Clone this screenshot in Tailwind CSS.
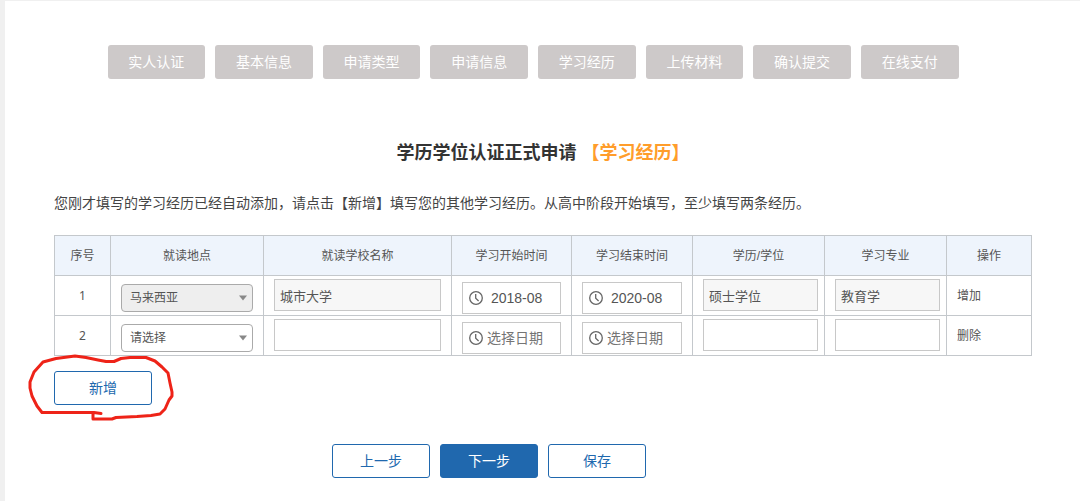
<!DOCTYPE html>
<html lang="zh-CN">
<head>
  <meta charset="UTF-8" />
  <meta name="viewport" content="width=device-width, initial-scale=1.0" />
  <title>学历学位认证正式申请</title>
  <script src="https://cdn.jsdelivr.net/npm/@tailwindcss/browser@4"></script>
</head>
<body class="min-h-screen bg-[#f0f0f0] pl-[5px] pt-px font-['Liberation_Sans','Noto_Sans_CJK_SC',sans-serif] text-sm text-[#555]">

  <svg class="hidden">
    <symbol id="clock" viewBox="0 0 14 14">
      <circle cx="7" cy="7" r="6.3" fill="none" stroke="currentColor" stroke-width="1.3" />
      <path d="M6.7 3v4.3L9.6 10" fill="none" stroke="currentColor" stroke-width="1.3" />
    </symbol>
    <symbol id="caret" viewBox="0 0 8 6">
      <path d="M0 .5h8L4 5.5z" fill="currentColor" />
    </symbol>
  </svg>

  <main class="min-h-[calc(100vh-1px)] bg-white pl-[49px] pr-12 pt-11 pb-5">

    <!-- Steps -->
    <nav class="flex justify-center pr-5">
      <div class="grid w-full max-w-[851px] grid-cols-8 gap-2.5 text-white">
        <button class="h-[34px] rounded-[3px] bg-[#cdc9c9]">实人认证</button>
        <button class="h-[34px] rounded-[3px] bg-[#cdc9c9]">基本信息</button>
        <button class="h-[34px] rounded-[3px] bg-[#cdc9c9]">申请类型</button>
        <button class="h-[34px] rounded-[3px] bg-[#cdc9c9]">申请信息</button>
        <button class="h-[34px] rounded-[3px] bg-[#cdc9c9]">学习经历</button>
        <button class="h-[34px] rounded-[3px] bg-[#cdc9c9]">上传材料</button>
        <button class="h-[34px] rounded-[3px] bg-[#cdc9c9]">确认提交</button>
        <button class="h-[34px] rounded-[3px] bg-[#cdc9c9]">在线支付</button>
      </div>
    </nav>

    <h1 class="mt-15 text-center text-lg font-bold text-[#333]">学历学位认证正式申请 <span class="text-[#ff9d2b]">【学习经历】</span></h1>

    <p class="mt-6 leading-6 text-[#444]">您刚才填写的学习经历已经自动添加，请点击【新增】填写您的其他学习经历。从高中阶段开始填写，至少填写两条经历。</p>

    <!-- Study history -->
    <table class="mt-5 w-full table-fixed border-collapse text-xs">
      <colgroup>
        <col class="w-14" />
        <col class="w-[153px]" />
        <col class="w-[188px]" />
        <col class="w-[120px]" />
        <col class="w-[121px]" />
        <col class="w-[132px]" />
        <col class="w-[122px]" />
        <col />
      </colgroup>
      <thead>
        <tr class="h-10 bg-[#eef4fc]">
          <th class="border border-[#c4c8cc] font-normal">序号</th>
          <th class="border border-[#c4c8cc] font-normal">就读地点</th>
          <th class="border border-[#c4c8cc] font-normal">就读学校名称</th>
          <th class="border border-[#c4c8cc] font-normal">学习开始时间</th>
          <th class="border border-[#c4c8cc] font-normal">学习结束时间</th>
          <th class="border border-[#c4c8cc] font-normal">学历/学位</th>
          <th class="border border-[#c4c8cc] font-normal">学习专业</th>
          <th class="border border-[#c4c8cc] font-normal">操作</th>
        </tr>
      </thead>
      <tbody>
        <tr class="h-10">
          <td class="border border-[#c4c8cc] text-center font-['Noto_Sans',sans-serif]">1</td>
          <td class="border border-[#c4c8cc] px-2.5 pt-2 align-top">
            <div class="relative">
              <select aria-label="就读地点 1" disabled class="block h-7 w-full appearance-none rounded-[4px] border border-[#aaa] bg-[#eee] px-2 text-[#555] opacity-100">
                <option>马来西亚</option>
              </select>
              <svg class="pointer-events-none absolute top-[11px] right-1.5 h-1.5 w-2 text-[#888]"><use href="#caret" /></svg>
            </div>
          </td>
          <td class="border border-[#c4c8cc] px-2.5 pt-[3px] align-top">
            <input aria-label="就读学校名称 1" type="text" value="城市大学" readonly class="block h-8 w-full border border-[#c8c8c8] bg-[#f7f7f7] px-[5px] text-[13px]" />
          </td>
          <td class="border border-[#c4c8cc] px-2.5 pt-1.5 align-top">
            <label class="flex h-8 items-center gap-1 border border-[#c8c8c8] pl-1.5">
              <svg class="size-[14px] shrink-0 text-[#666]"><use href="#clock" /></svg>
              <input aria-label="学习开始时间 1" type="text" value=" 2018-08" placeholder="选择日期" class="w-full min-w-0 text-sm outline-none placeholder:text-[#757575]" />
            </label>
          </td>
          <td class="border border-[#c4c8cc] px-2.5 pt-1.5 align-top">
            <label class="flex h-8 items-center gap-1 border border-[#c8c8c8] pl-1.5">
              <svg class="size-[14px] shrink-0 text-[#666]"><use href="#clock" /></svg>
              <input aria-label="学习结束时间 1" type="text" value=" 2020-08" placeholder="选择日期" class="w-full min-w-0 text-sm outline-none placeholder:text-[#757575]" />
            </label>
          </td>
          <td class="border border-[#c4c8cc] pl-2.5 pr-1.5 pt-[3px] align-top">
            <input aria-label="学历/学位 1" type="text" value="硕士学位" readonly class="block h-8 w-full border border-[#c8c8c8] bg-[#f7f7f7] px-[5px] text-[13px]" />
          </td>
          <td class="border border-[#c4c8cc] pl-2.5 pr-1.5 pt-[3px] align-top">
            <input aria-label="学习专业 1" type="text" value="教育学" readonly class="block h-8 w-full border border-[#c8c8c8] bg-[#f7f7f7] px-[5px] text-[13px]" />
          </td>
          <td class="border border-[#c4c8cc] px-2.5"><a href="#">增加</a></td>
        </tr>
        <tr class="h-10">
          <td class="border border-[#c4c8cc] text-center font-['Noto_Sans',sans-serif]">2</td>
          <td class="border border-[#c4c8cc] px-2.5 pt-2 align-top">
            <div class="relative">
              <select aria-label="就读地点 2" class="block h-7 w-full appearance-none rounded-[4px] border border-[#aaa] bg-white px-2 text-[#555]">
                <option>请选择</option>
                <option>马来西亚</option>
              </select>
              <svg class="pointer-events-none absolute top-[11px] right-1.5 h-1.5 w-2 text-[#888]"><use href="#caret" /></svg>
            </div>
          </td>
          <td class="border border-[#c4c8cc] px-2.5 pt-[3px] align-top">
            <input aria-label="就读学校名称 2" type="text" class="block h-8 w-full border border-[#c8c8c8] px-[5px] text-[13px]" />
          </td>
          <td class="border border-[#c4c8cc] px-2.5 pt-1.5 align-top">
            <label class="flex h-8 items-center gap-1 border border-[#c8c8c8] pl-1.5">
              <svg class="size-[14px] shrink-0 text-[#666]"><use href="#clock" /></svg>
              <input aria-label="学习开始时间 2" type="text" placeholder="选择日期" class="w-full min-w-0 text-sm outline-none placeholder:text-[#757575]" />
            </label>
          </td>
          <td class="border border-[#c4c8cc] px-2.5 pt-1.5 align-top">
            <label class="flex h-8 items-center gap-1 border border-[#c8c8c8] pl-1.5">
              <svg class="size-[14px] shrink-0 text-[#666]"><use href="#clock" /></svg>
              <input aria-label="学习结束时间 2" type="text" placeholder="选择日期" class="w-full min-w-0 text-sm outline-none placeholder:text-[#757575]" />
            </label>
          </td>
          <td class="border border-[#c4c8cc] pl-2.5 pr-1.5 pt-[3px] align-top">
            <input aria-label="学历/学位 2" type="text" class="block h-8 w-full border border-[#c8c8c8] px-[5px] text-[13px]" />
          </td>
          <td class="border border-[#c4c8cc] pl-2.5 pr-1.5 pt-[3px] align-top">
            <input aria-label="学习专业 2" type="text" class="block h-8 w-full border border-[#c8c8c8] px-[5px] text-[13px]" />
          </td>
          <td class="border border-[#c4c8cc] px-2.5"><a href="#">删除</a></td>
        </tr>
      </tbody>
    </table>

    <!-- Add row, circled by hand -->
    <div class="relative mt-[15px] w-fit">
      <button class="block h-[34px] w-[98px] rounded-[3px] border border-[#2068ae] text-[#2068ae]">新增</button>
      <svg class="pointer-events-none absolute -top-[26px] -left-[34px] h-[85px] w-[170px]" viewBox="0 0 170 85" fill="none" stroke="#ee2318" stroke-width="3" stroke-linejoin="round" stroke-linecap="round">
        <path d="M81 68.500L74 67.500H22L17 61L12 51L10 43V37L14 27L23 17L36 13.500L55 11L66 12.500L78 15L86 16.500H94L101 13.500L110 12.500H126L135 16L142 22L148 28L150 38L152 47V51L149 55L145 64L140 69L131 70.500L117 71.500L96 72.500L92 74H73V68.500" />
      </svg>
    </div>

    <!-- Form actions -->
    <div class="mt-[39px] flex justify-center gap-2.5 pr-[108px]">
      <button class="h-[34px] w-[98px] rounded-[3px] border border-[#2068ae] text-[#2068ae]">上一步</button>
      <button class="h-[34px] w-[98px] rounded-[3px] border border-[#2068ae] bg-[#2068ae] text-white">下一步</button>
      <button class="h-[34px] w-[98px] rounded-[3px] border border-[#2068ae] text-[#2068ae]">保存</button>
    </div>
  </main>
</body>
</html>
